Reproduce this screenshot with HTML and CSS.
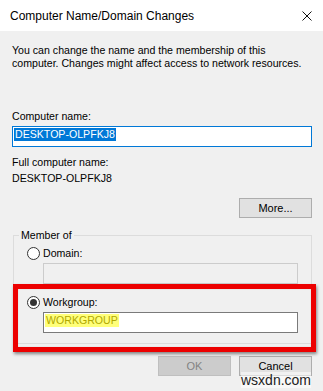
FILE: index.html
```html
<!DOCTYPE html>
<html lang="en">

<head>
    <meta charset="UTF-8">
    <meta name="viewport" content="width=device-width, initial-scale=1.0">
    <title>Computer Name/Domain Changes</title>
    <link rel="stylesheet" href="styles.css">
</head>

<body>
    <div class="window">
        <div class="titlebar">
            <span class="title">Computer Name/Domain Changes</span>
            <svg class="close" width="10" height="10" viewBox="0 0 10 10">
                <path d="M0.5 0.5 L9.5 9.5 M9.5 0.5 L0.5 9.5" stroke="#111" stroke-width="1" fill="none" />
            </svg>
        </div>

        <div class="content">
            <p class="intro">You can change the name and the membership of this<br>computer. Changes might affect access to network resources.</p>

            <div class="label first">Computer name:</div>
            <div class="textbox focused"><span class="selected">DESKTOP-OLPFKJ8</span></div>

            <div class="label full">Full computer name:</div>
            <div class="value">DESKTOP-OLPFKJ8</div>

            <div class="more-row">
                <button class="btn">More...</button>
            </div>

            <fieldset class="group">
                <legend>Member of</legend>
                <div class="radio-row"><span class="radio"></span>Domain:</div>
                <div class="textbox disabled"></div>
                <div class="radio-row workgroup"><span class="radio checked"></span>Workgroup:</div>
                <div class="textbox"><span class="marked">WORKGROUP</span></div>
            </fieldset>

            <div class="actions">
                <button class="btn" disabled>OK</button>
                <button class="btn">Cancel</button>
            </div>
        </div>

        <!-- annotation + watermark sit on top of the dialog -->
        <div class="highlight-box"></div>
        <div class="watermark">wsxdn.com</div>
    </div>
</body>

</html>
```

FILE: styles.css
```css
body {
    margin: 0;
    padding: 0;
    background: #f0f0f0;
    font-family: 'Liberation Sans', Arial, sans-serif;
    font-size: 10.6px;
    color: #000;
}

.window {
    position: relative;
    width: 323px;
    height: 391px;
    background: #f0f0f0;
    overflow: hidden;
}

.titlebar {
    height: 31px;
    background: #fff;
    display: flex;
    align-items: center;
    justify-content: space-between;
    padding: 0 11px 0 10px;
}

.title {
    font-size: 12px;
}

.close {
    display: block;
}

.content {
    padding: 0 11px 0 12px;
}

.intro {
    margin: 13px 0 0;
    line-height: 13px;
    white-space: nowrap;
}

.label,
.value {
    line-height: 13px;
}

.label.first {
    margin-top: 40px;
}

.label.full {
    margin-top: 9px;
}

.value {
    margin-top: 3px;
}

.textbox {
    box-sizing: border-box;
    height: 21px;
    margin-top: 3px;
    padding: 1px 1px;
    background: #fff;
    border: 1px solid #7a7a7a;
    line-height: 13px;
}

.textbox.focused {
    border-color: #0078d7;
}

.selected {
    display: inline-block;
    padding: 0 1px;
    background: #0078d7;
    color: #fff;
}

.textbox.disabled {
    background: #f0f0f0;
    border-color: #cccccc;
}

.marked {
    display: inline-block;
    padding: 0 1px;
    background: #ffff7a;
    color: #b0a800;
    line-height: 13px;
}

.more-row,
.actions {
    display: flex;
    justify-content: flex-end;
    gap: 8px;
}

.more-row {
    margin-top: 13px;
}

.btn {
    box-sizing: border-box;
    width: 73px;
    height: 20px;
    padding: 0;
    font-family: inherit;
    font-size: 11px;
    color: #000;
    background: #e1e1e1;
    border: 1px solid #adadad;
    border-radius: 0;
}

.btn:disabled {
    background: #cccccc;
    border-color: #bfbfbf;
    color: #838383;
}

.group {
    margin: 11px 0 0 1px;
    padding: 5px 13px 10px;
    border: 1px solid #dcdcdc;
}

.group legend {
    padding: 0 2px;
    margin-left: -8px;
    line-height: 13px;
}

.radio-row {
    display: flex;
    align-items: center;
    gap: 3px;
    line-height: 13px;
}

.radio-row.workgroup {
    margin-top: 12px;
}

.radio {
    box-sizing: border-box;
    width: 13px;
    height: 13px;
    border: 1px solid #333;
    border-radius: 50%;
    background: #fff;
    display: flex;
    align-items: center;
    justify-content: center;
}

.radio.checked::after {
    content: '';
    width: 7px;
    height: 7px;
    border-radius: 50%;
    background: #333;
}

.group .textbox {
    margin-left: 16px;
}

.actions {
    margin-top: 12px;
}

.highlight-box {
    position: absolute;
    left: 13px;
    top: 284px;
    width: 303px;
    height: 68px;
    box-sizing: border-box;
    border: 5px solid #ec0000;
    box-shadow: 1px 2px 3px rgba(0, 0, 0, 0.45), inset 0 0 1px rgba(0, 0, 0, 0.3);
}

.watermark {
    position: absolute;
    left: 241px;
    top: 372px;
    font-size: 14px;
    line-height: 16px;
    color: #222;
    background: rgba(255, 255, 255, 0.55);
}
```
